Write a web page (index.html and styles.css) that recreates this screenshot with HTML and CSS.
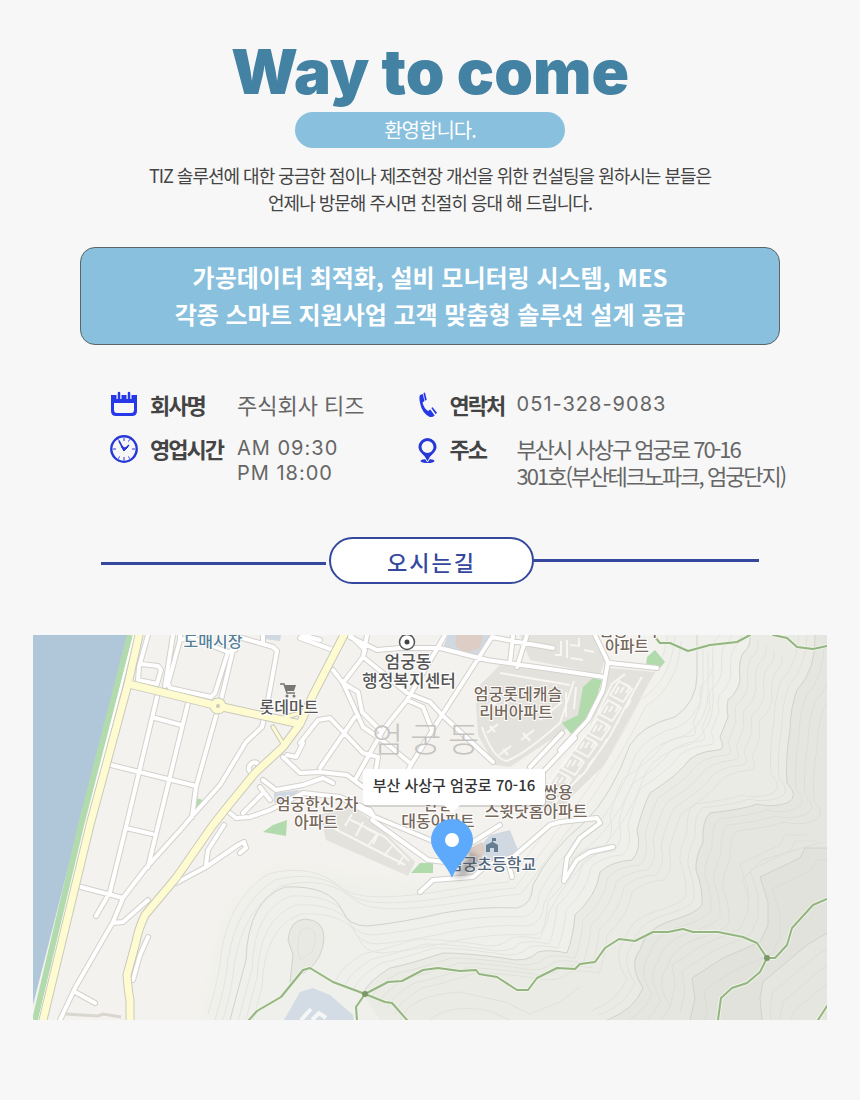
FILE: index.html
```html
<!DOCTYPE html>
<html lang="ko">
<head>
<meta charset="utf-8">
<meta name="viewport" content="width=device-width, initial-scale=1">
<title>Way to come</title>
<link rel="stylesheet" href="styles.css">
</head>
<body>
<main class="page">
  <header class="intro">
    <h1 class="title">Way to come</h1>
    <p class="welcome">환영합니다.</p>
    <p class="lead">TIZ 솔루션에 대한 궁금한 점이나 제조현장 개선을 위한 컨설팅을 원하시는 분들은<br>언제나 방문해 주시면 친절히 응대 해 드립니다.</p>
  </header>

  <p class="banner">가공데이터 최적화, 설비 모니터링 시스템, MES<br>각종 스마트 지원사업 고객 맞춤형 솔루션 설계 공급</p>

  <section class="info">
    <dl class="info-col">
      <div class="row">
        <svg class="icon" viewBox="0 0 28 28" aria-hidden="true"><path d="M1 4h26v16q0 5-5 5H6q-5 0-5-5zM4 12v7q0 3 3 3h14q3 0 3-3v-7z" fill="#2638e8" fill-rule="evenodd"/><path d="M9 1v7M19 1v7" stroke="#f7f7f7" stroke-width="5"/><path d="M9 2v6M19 2v6" stroke="#2638e8" stroke-width="2.500" stroke-linecap="round"/></svg>
        <dt class="label">회사명</dt><dd class="value">주식회사 티즈</dd>
      </div>
      <div class="row">
        <svg class="icon" viewBox="0 0 28 28" aria-hidden="true" fill="none" stroke="#2638d8"><circle cx="14" cy="14" r="12.700" stroke-width="2.400"/><path d="M14 3v3M14 22v3M3 14h3M22 14h3M8.500 4.500l1 2M18.500 21.500l1 2M19.500 4.500l-1 2M9.500 21.500l-1 2" stroke-width="1"/><path d="M9 6l5 9 5-5" stroke-width="1.600"/><path d="M11 11l3 5 4-4-3 1z" fill="#2638d8"/></svg>
        <dt class="label">영업시간</dt><dd class="value latin">AM 09:30<br>PM 18:00</dd>
      </div>
    </dl>
    <dl class="info-col contact">
      <div class="row">
        <svg class="icon" viewBox="0 0 20 28" aria-hidden="true"><path d="M2 4l3-1q.6 4 1.500 7l-2 1.500q1.500 6 5.500 8.500l2.300-1.500 4.400 6q-2 2-5 1.500Q4 22 2 12q-1.200-6 0-8zM5.500 2l1.500-.5 1.800 7.500-1.800.6zM13.300 17l1.300-.8 4.400 5.500-1.300 1.500z" fill="#2638e8"/></svg>
        <dt class="label">연락처</dt><dd class="value latin">051-328-9083</dd>
      </div>
      <div class="row">
        <svg class="icon" viewBox="0 0 20 28" aria-hidden="true"><ellipse cx="9.500" cy="26" rx="7" ry="2" fill="#2638d8"/><path d="M9.500 27l-3-5h6z" fill="#2638d8" stroke="#f7f7f7"/><path d="M9.500 3a9 9 0 0 0-9 9c0 5 6 8 9 13 3-5 9-8 9-13a9 9 0 0 0-9-9zm0 3a6 6 0 1 1 0 12 6 6 0 0 1 0-12z" fill="#2638d8" fill-rule="evenodd"/></svg>
        <dt class="label">주소</dt><dd class="value tight">부산시 사상구 엄궁로 70-16<br>301호(부산테크노파크, 엄궁단지)</dd>
      </div>
    </dl>
  </section>

  <div class="section-head">
    <span class="rule rule-left"></span>
    <h2 class="section-title">오시는길</h2>
    <span class="rule"></span>
  </div>

  <svg class="map" viewBox="33 635 794 385" role="img" aria-label="부산 사상구 엄궁로 70-16 지도">
    <defs>
      <filter id="shade" x="-50%" y="-50%" width="200%" height="200%"><feGaussianBlur stdDeviation="3"/></filter>
      <filter id="soft" x="-10%" y="-10%" width="120%" height="120%"><feGaussianBlur stdDeviation="8"/></filter>
      <g id="blocks">
        <path d="M-12 5l9-14 13 8-9 13zM-7 4l4-7M1-7l7 4-4 6M-2 3l4-6"/>
      </g>
      <path id="streets" d="M148 635L139 667 138 680 157 684 161 670 158 666 141 664M173 635L165 686M180 640L168 684 170 688 211 697 215 693 228 652M233 650L221 700M180 635L180 640 190 637 228 652 235 650M232 635L273 647 277 651 268 700 262 727 246 742 220 785 193 815 183 827 146 868 123 898 113 922 75 988 60 1020M263 635V643M157 697L126 827 110 892 96 916M188 703L157 830 148 867M155 718L181 725M216 716L196 787 192 817M111 765L196 786M126 828L152 834M81 887L123 898M113 923L123 922 148 900M75 992L95 1003M148 937L140 955 133 980M176 883L206 867 238 845 244 842 246 848 240 853M206 865L208 850 224 825M230 813L236 818 250 817 270 810 303 793 340 797 370 810 373 815M243 813L263 793M260 787L270 800M263 780L276 790 303 785 323 778 333 783M253 775Q245 768 252 763 256 761 259 765M283 757L300 773 320 772 347 775 363 787M287 755L296 757 303 743M333 670L343 683 363 727 382 740 410 763M343 683L363 657 367 635M350 635L365 650 363 657 383 673 407 693 430 702 442 715 493 762M343 683L358 692 362 712 380 730M492 637L442 715 412 763 400 785M445 635L407 700 383 730 355 780M407 700L423 707 432 730M300 743L318 720 330 718 363 753 378 757 375 775M320 768L355 717M300 638L333 650M302 635L320 640M350 637L377 650 400 648 440 648 487 660 557 670 604 677M492 637L507 640 553 648M513 635L510 663M527 635L517 667M562 733L530 767M575 738L540 775M595 635L608 662 603 690 588 720 560 750M610 663L657 668M372 820L428 860 445 862M420 892L433 880 473 877 487 865 513 857 550 825 560 822 597 818 600 823 580 838 567 858 564 881 577 860 590 852 613 847M508 862L512 877M473 842L500 825M340 797l35 20 60 25"/>
      <path id="avenues" d="M139 635L128 684 90 825 43 1020M129 684L218 706 300 724M344 635L313 695 300 724 283 747 255 773 228 806 213 825 176 878 145 915Q138 930 136 942L127 975Q128 990 130 1000V1020"/>
      <path id="trails" d="M249 1020L257 1011 281 997 303 970 310 968 333 982 365 994 388 982 402 981 423 970 438 968 460 971 476 970 479 974 497 977 517 990 528 990 537 978 557 968 575 969 580 964 595 962 605 948 619 939 635 941 653 932 668 932 683 929 693 932 718 932 743 937 757 943 767 958 775 958 787 945 792 928 813 905 827 899M767 958L760 972 747 983 732 988 721 998 718 1020M818 1020L827 1006M365 994L385 1002 392 1003 407 1020M365 994L356 1007 357 1020M655 637L660 643 670 643 688 651 710 645 737 642 750 635M773 635L787 638 797 647 813 649 827 646"/>
      <path id="k1" d="M750 635Q751 647 744 652 738 658 740 680 738 692 728 700 726 708 728 717L720 737Q726 750 718 750 692 752 684 766 676 776 650 793 643 807 637 830 642 850 632 860 612 861 600 872 597 895 575 915 573 938 567 953 548 949 538 952 527 964 503 958 467 953 443 953 410 964 390 968 367 982 363 994"/>
      <path id="k2" d="M815 635Q816 670 797 690 790 710 790 730 785 760 787 783 800 797 787 803 772 808 757 804 745 809 710 813 702 820 703 842 695 858 696 870 703 888 702 905 698 913 667 922 645 930 640 950 628 965 643 988 634 1010 607 1020"/>
      <path id="k3" d="M827 848L805 848 800 858 760 877 768 902 768 925 760 942 723 958 692 978 695 998 690 1020"/>
      <path id="k4" d="M827 933L807 945 763 982 760 998 762 1020"/>
      <path id="k5" d="M230 1020L246 960Q248 900 285 887 330 885 342 910 348 926 367 926 400 923 443 913 480 906 517 908 532 905 533 885 550 850 585 822 612 795 630 745 642 725 675 717 697 702 697 675V635"/>
      <path id="k6" d="M215 1020Q226 985 228 960 236 905 275 880 320 868 350 895 370 909 443 898 490 890 515 888 540 855 580 800 610 760 640 700 672 680 675 635"/>
    </defs>

    <rect class="land" x="33" y="635" width="794" height="385"/>
    <path d="M200 1040L215 955Q230 880 285 867L400 882 530 875 600 790 665 670 655 620H850V1040Z" fill="#eff0eb" filter="url(#soft)"/>
    <path d="M33 635H128L79 825 33 1005Z" fill="#b0c7da"/>
    <path d="M130 635L81 825 35 1020" stroke="#b2dbad" stroke-width="6" fill="none"/>
    <path d="M134 635L86 825 39 1020" stroke="#fff" stroke-width="2" fill="none"/>
    <path d="M136 635L88 825 41 1020" stroke="#c8c8c0" fill="none"/>

    <path d="M750 635Q751 647 744 652 738 658 740 680 738 692 728 700 726 708 728 717L720 737Q726 750 718 750 692 752 684 766 676 776 650 793 643 807 637 830 642 850 632 860 612 861 600 872 597 895 575 915 573 938 567 953 548 949 538 952 527 964 503 958 467 953 443 953 410 964 390 968 367 982 363 994L380 1020H827V635Z" fill="#ebebe6"/>
    <path d="M815 635Q816 670 797 690 790 710 790 730 785 760 787 783 800 797 787 803 772 808 757 804 745 809 710 813 702 820 703 842 695 858 696 870 703 888 702 905 698 913 667 922 645 930 640 950 628 965 643 988 634 1010 607 1020H827V635Z" fill="#e6e6e1"/>
    <path d="M827 848H805L800 858 760 877 768 902V925L760 942 723 958 692 978 695 998 690 1020H762L760 998 763 982 807 945 827 933Z" fill="#e1e2dc"/>
    <path d="M290 982L293 955 288 940Q290 920 305 919 324 920 324 938 323 958 308 970Z" fill="#e9e9e4"/>

    <g class="contours">
      <g class="minor">
        <use href="#k1" x="8" y="5"/><use href="#k1" x="16" y="10"/><use href="#k1" x="24" y="15"/><use href="#k1" x="32" y="20"/>
        <use href="#k1" x="-9" y="-5"/><use href="#k1" x="-18" y="-9"/><use href="#k1" x="-27" y="-14"/>
        <use href="#k2" x="9" y="6"/><use href="#k2" x="18" y="12"/><use href="#k2" x="27" y="18"/><use href="#k2" x="-8" y="-5"/><use href="#k2" x="-16" y="-9"/>
        <use href="#k3" x="12" y="12"/><use href="#k3" x="-10" y="-7"/><use href="#k3" x="-20" y="-13"/>
        <use href="#k4" x="10" y="10"/><use href="#k4" x="20" y="20"/><use href="#k4" x="30" y="30"/>
        <use href="#k6"/><use href="#k6" x="-7" y="-6"/><use href="#k6" x="6" y="6"/><use href="#k5" x="6" y="9"/><use href="#k5" x="11" y="18"/><use href="#k5" x="16" y="27"/>
        <path d="M300 932q-4 16 0 28l12-8q8-20-3-24-6-1-9 4M400 1020q10-25 60-28l45 10 25 12 30-12 20-15M430 1020q18-17 60-9l20 9M750 900l-8-20 20-20 60-18"/>
      </g>
      <use href="#k1"/><use href="#k2"/><use href="#k3"/><use href="#k4"/><use href="#k5"/>
      <path d="M290 982L293 955 288 940Q290 920 305 919 324 920 324 938 323 958 308 970Z"/>
    </g>

    <g fill="#e4e2dc">
      <path d="M475 690L500 665 597 678 585 705 565 730 510 767 495 765 478 735Z"/>
      <path d="M530 660L520 635H592L605 660 600 674Z"/>
      <path d="M610 668L655 672 604 765 553 815 535 800 588 732Z"/>
      <path d="M320 815L350 805 375 823 415 862 408 876 326 840Z"/>
    </g>
    <g class="estate">
      <use href="#blocks" x="622" y="690"/><use href="#blocks" x="611" y="709"/><use href="#blocks" x="600" y="728"/><use href="#blocks" x="587" y="745"/><use href="#blocks" x="574" y="763"/><use href="#blocks" x="561" y="780"/>
      <path d="M640 680l-12 22-18 34-25 36-32 32M625 674l-13 10-22 45-42 54M637 685l5-8M626 708l5-8M614 728l5-8M602 748l5-9M588 766l6-8M574 783l6-8"/>
      <path d="M487 733l11-9m-8 2l5 6M521 740l13-10m-11 3l7 8M499 755l12-9m-8 3l5 6M484 712l18-14M540 720l22-18M566 692v25M576 687l-2 22M482 727q10 30 24 34 15-4 54-38l14-42M500 673l70 12"/>
      <path d="M561 641v14h-6M567 640v18M579 638v8l-9-1M584 650l10 2M571 658l12 2"/>
      <path d="M349 819l36 18 24 24M335 829l70 36M352 814l-7 12M363 822l-7 14M377 834l-9 12M392 846l-8 10M403 857l-5 8M367 829l11 5-5 10"/>
    </g>

    <path d="M593 678L602 680 592 713 572 735 562 723 578 715 583 687ZM647 657L655 650 665 662 660 668 646 665ZM196 798L203 800 195 812ZM263 832L273 825 287 820 286 836ZM411 873L420 863H433V873Z" fill="#b2dbad"/>
    <path d="M448 635H490L480 656 443 648ZM264 635H281L280 641 264 639ZM463 866L490 835 510 830 518 850 500 868ZM274 793L300 790 285 802 274 803Z" fill="#d0d8e1"/>
    <path d="M457 635H483L480 648 465 653 455 645ZM466 850L482 842 485 851 476 864Z" fill="#ddcdc4"/>
    <path d="M284 1020L300 992 313 988 330 995 353 1015 354 1020Z" fill="#d3dce4"/>
    <path d="M301 1020l10-11M312 1020l7-7 7 5" fill="none" stroke="#f5f6f6" stroke-width="4"/>

    <use href="#streets" class="road-edge"/><use href="#streets" class="road"/>
    <path d="M273 727L285 747M276 720L300 713" class="link-edge"/>
    <use href="#avenues" class="avenue-edge"/>
    <circle cx="218" cy="706" r="8.500" fill="#c9c9bd"/>
    <use href="#avenues" class="avenue"/>
    <path d="M273 727L285 747M276 720L300 713" class="link"/>
    <circle cx="218" cy="706" r="7.500" fill="#fffbd0"/><circle cx="218" cy="706" r="2" fill="#ccc9b8"/>
    <path d="M65 1014l33 2 5-2 18 3" stroke="#d9d6ce" stroke-width="3" fill="none"/>
    <use href="#trails" class="trail-edge"/><use href="#trails" class="trail"/>
    <circle cx="365" cy="994" r="3" fill="#7b9869"/><circle cx="767" cy="958" r="3" fill="#7b9869"/>

    <path d="M280 684h4l3 9h8" fill="none" stroke="#777" stroke-width="1.500"/><path d="M284 685h12l-2 6h-8z" fill="#777"/><circle cx="287" cy="696" r="1.500" fill="#777"/><circle cx="294" cy="696" r="1.500" fill="#777"/>
    <circle cx="407" cy="642" r="7.500" fill="#fff" stroke="#555" stroke-width="1.500"/><circle cx="407" cy="642" r="2.500" fill="#444"/>
    <path d="M486 852v-7l6-3v-4h4v3h-3v1l5 3v7h-4v-4h-4v4z" fill="#667d92"/>

    <g class="place">
      <text class="district" x="372 410 448" y="752">엄궁동</text>
      <text class="water" x="213" y="647">도매시장</text>
      <text x="289" y="713">롯데마트</text>
      <g class="office"><text x="408" y="668">엄궁동</text><text x="409" y="687">행정복지센터</text></g>
      <g class="apt">
        <text x="628" y="636">엄궁자이</text><text x="627" y="652">아파트</text>
        <text x="518" y="700">엄궁롯데캐슬</text><text x="516" y="718">리버아파트</text>
        <text x="317" y="810">엄궁한신2차</text><text x="316" y="828">아파트</text>
        <text x="438" y="810">한림</text><text x="438" y="827">대동아파트</text>
        <text x="558" y="798">쌍용</text><text x="536" y="817">스윗닷홈아파트</text>
      </g>
      <text class="school" x="492" y="870">엄궁초등학교</text>
    </g>

    <rect x="363" y="770" width="183" height="37" rx="4" fill="#777" opacity=".25"/>
    <path d="M366 769H542Q545 769 545 772V802Q545 805 542 805H460L452 813 444 805H366Q363 805 363 802V772Q363 769 366 769Z" fill="#fff"/>
    <text class="callout" x="454" y="791">부산 사상구 엄궁로 70-16</text>
    <path d="M454 878L470 851 480 860 466 876Z" fill="#555" opacity=".45" filter="url(#shade)"/>
    <path d="M452 878C447 864 431 853 431 840A21 21 0 0 1 473 840C473 853 457 864 452 878Z" fill="#5da9fb"/>
    <circle cx="452" cy="840" r="7" fill="#fff"/>
  </svg>
</main>
</body>
</html>
```
FILE: styles.css
```css
* {
  box-sizing: border-box;
}

body {
  margin: 0;
  background: #f7f7f7;
  color: #444;
  font-family: "Noto Sans CJK KR", "Noto Sans", sans-serif;
}

h1, h2, p, dl, dd {
  margin: 0;
}

.page {
  max-width: 860px;
  margin: 0 auto;
  padding: 36px 33px 80px;
}

.intro {
  display: flex;
  flex-direction: column;
  align-items: center;
  text-align: center;
}

.title {
  color: #4382a3;
  font: 900 62px/72px Inter, "Liberation Sans", sans-serif;
}

.welcome {
  width: 270px;
  max-width: 100%;
  margin-top: 4px;
  border-radius: 18px;
  background: #88c0de;
  color: #fff;
  font-size: 20px;
  line-height: 36px;
  letter-spacing: -1px;
}

.lead {
  margin-top: 14px;
  font-size: 18px;
  line-height: 27px;
  letter-spacing: -1px;
}

.banner {
  margin: 31px 47px 0;
  padding: 10px 0 12px;
  border: 1px solid #5d6468;
  border-radius: 15px;
  background: #88c0de;
  color: #fff;
  font-size: 24px;
  font-weight: 700;
  line-height: 37px;
  text-align: center;
}

.info {
  display: flex;
  gap: 53px;
  padding: 46px 0 0 77px;
}

.info-col {
  display: flex;
  flex-direction: column;
  gap: 16px;
}

.row {
  display: flex;
  align-items: flex-start;
}

.icon {
  flex: none;
  width: 28px;
  height: 28px;
  margin-right: 12px;
}

.label {
  flex: none;
  width: 87px;
  font-size: 22px;
  font-weight: 700;
  line-height: 26px;
  letter-spacing: -2px;
}

.value {
  color: #666;
  font-size: 22px;
  line-height: 26px;
  white-space: nowrap;
}

.latin {
  padding-top: 1px;
  font-family: Inter, "Liberation Sans", sans-serif;
  font-size: 20px;
  line-height: 25px;
  letter-spacing: 1px;
}

.contact .icon {
  width: 20px;
}

.contact .label {
  width: 67px;
}

.tight {
  line-height: 27px;
  letter-spacing: -2px;
}

.section-head {
  display: flex;
  align-items: center;
  margin: 48px 68px 51px;
}

.rule {
  flex: 1;
  height: 3px;
  background: #34489d;
}

.rule-left {
  margin: 6px 3px 0 0;
}

.section-title {
  width: 205px;
  padding-top: 2px;
  border: 2px solid #34489d;
  border-radius: 24px;
  background: #fff;
  color: #34489d;
  font-size: 22px;
  font-weight: 500;
  line-height: 41px;
  letter-spacing: 2px;
  text-align: center;
}

.map {
  display: block;
  width: 100%;
  height: auto;
}

.land { fill: #f4f2ee; }

.contours {
  fill: none;
  stroke: #d2d2cd;
  stroke-width: 1;
  stroke-linejoin: round;
}

.contours .minor {
  opacity: 0.4;
}

.estate {
  fill: none;
  stroke: #f7f6f3;
  stroke-width: 2;
}

.road-edge, .road, .avenue-edge, .avenue, .link-edge, .link, .trail-edge, .trail {
  fill: none;
  stroke-linecap: round;
  stroke-linejoin: round;
}

.road-edge { stroke: #d3d1cd; stroke-width: 6; }
.road { stroke: #fff; stroke-width: 4; }
.avenue-edge { stroke: #c9c9bd; stroke-width: 9; }
.avenue { stroke: #fffbd0; stroke-width: 7; }
.link-edge { stroke: #c9c9bd; stroke-width: 5; }
.link { stroke: #fffbd0; stroke-width: 3; }
.trail-edge { stroke: #eef3e6; stroke-width: 4; }
.trail { stroke: #94b582; stroke-width: 2; }

.place text {
  fill: #555;
  stroke: #fff;
  stroke-width: 2px;
  paint-order: stroke;
  font-size: 16px;
  font-weight: 500;
  text-anchor: middle;
}

.place .office text { font-size: 17px; }
.place .apt text { fill: #76685b; }
.place .water { fill: #547f99; }
.place .school { fill: #52667c; }

.place .district {
  fill: #c5c3c1;
  stroke: none;
  font-size: 34px;
  font-weight: 300;
  text-anchor: start;
}

.callout {
  fill: #333;
  font-size: 15px;
  font-weight: 500;
  text-anchor: middle;
}
```
